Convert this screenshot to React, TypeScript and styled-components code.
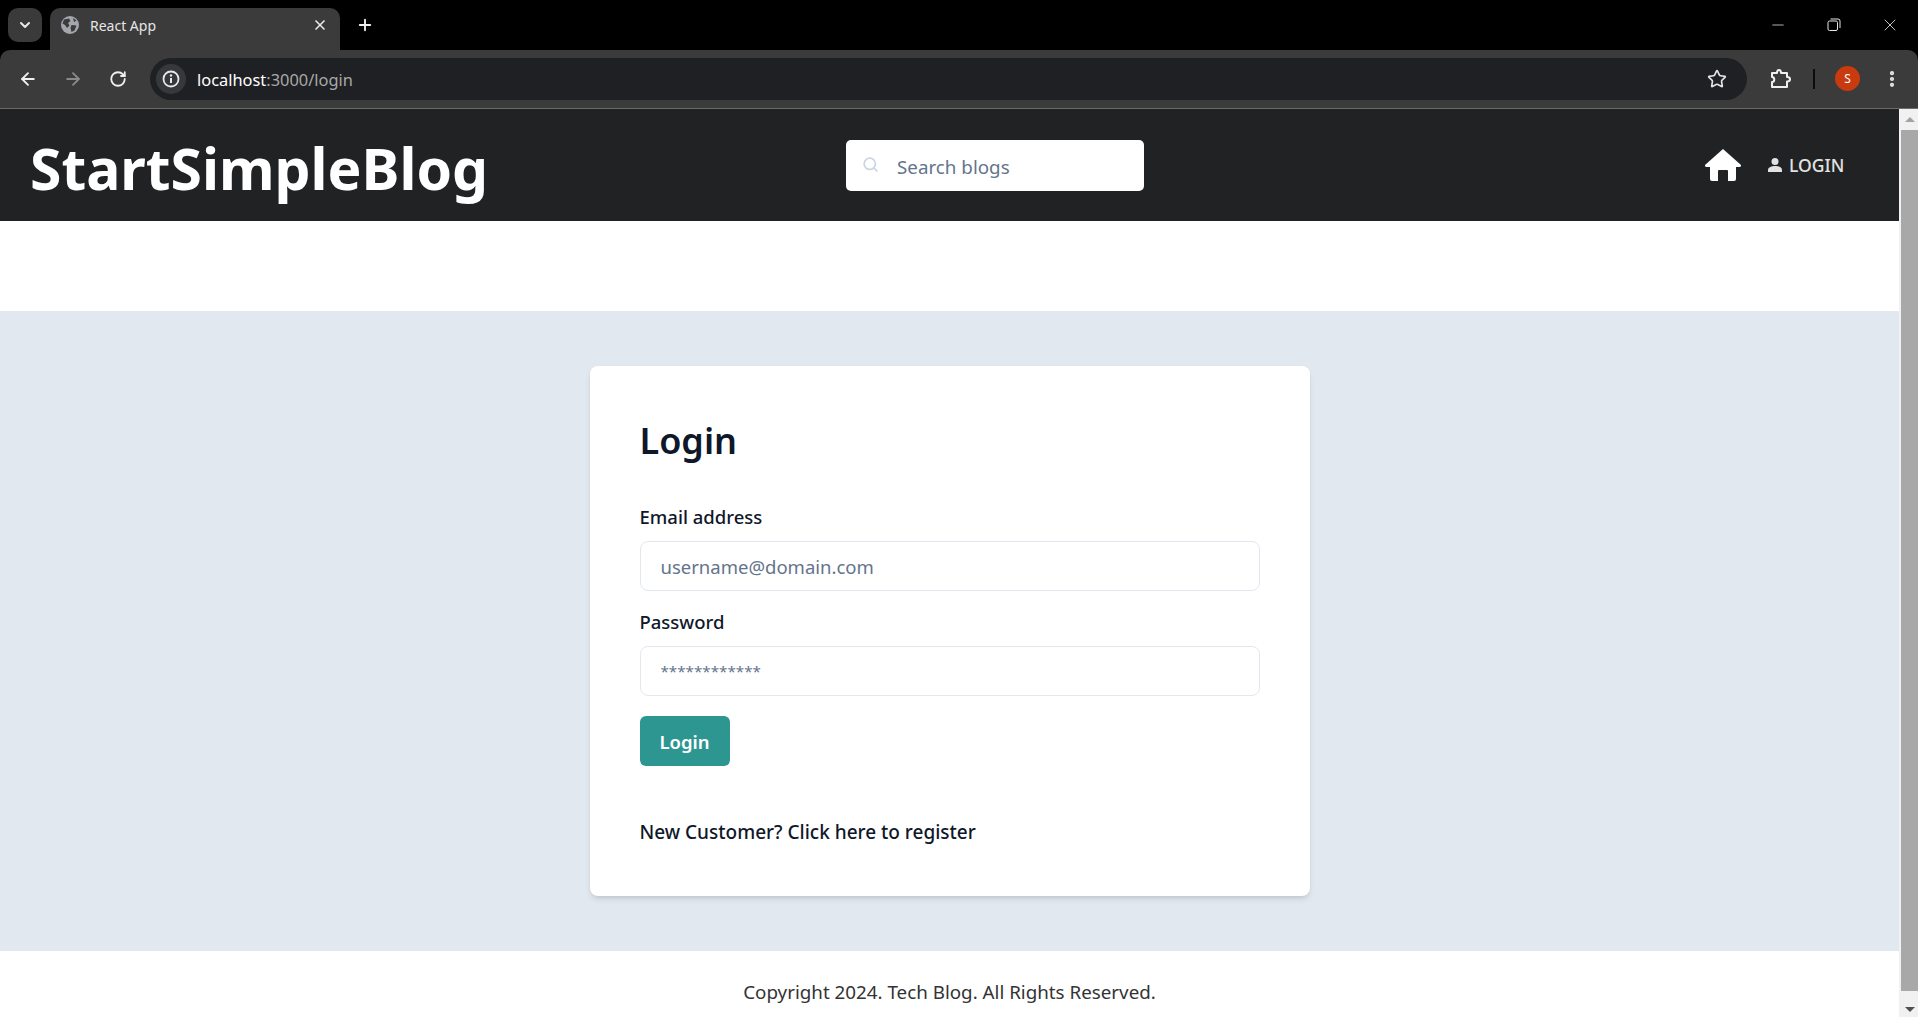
import styled, { createGlobalStyle } from "styled-components";
import { ArrowLeft, ArrowRight, RotateCw, Plus, X, ChevronDown, Star, Minus, EllipsisVertical, Search } from "lucide-react";

const GlobalStyle = createGlobalStyle`
  html, body {
    margin: 0;
    padding: 0;
    height: 100%;
    overflow: hidden;
  }
  * {
    box-sizing: border-box;
  }
  body {
    font-family: "Noto Sans", "Open Sans", sans-serif;
  }
`;

export default function App() {
  return (
    <Window>
      <GlobalStyle />
      <TabStrip>
        <TabSearch>
          <ChevronDown size={16} strokeWidth={3} />
        </TabSearch>
        <Tab>
          <Globe />
          <TabTitle>React App</TabTitle>
          <TabClose>
            <X size={16} strokeWidth={2.5} />
          </TabClose>
        </Tab>
        <NewTab>
          <Plus size={18} strokeWidth={2.5} />
        </NewTab>
        <WindowControls>
          <WinButton>
            <Minus size={18} strokeWidth={1} />
          </WinButton>
          <WinButton>
            <RestoreIcon />
          </WinButton>
          <WinButton>
            <X size={20} strokeWidth={1} />
          </WinButton>
        </WindowControls>
      </TabStrip>
      <Toolbar>
        <NavButton>
          <ArrowLeft size={20} strokeWidth={2.2} />
        </NavButton>
        <NavButton $dim>
          <ArrowRight size={20} strokeWidth={2.2} />
        </NavButton>
        <NavButton>
          <RotateCw size={18} strokeWidth={2.4} />
        </NavButton>
        <AddressBar>
          <InfoChip>
            <InfoIcon />
          </InfoChip>
          <Url>
            <b>localhost</b>:3000/login
          </Url>
          <Star size={20} strokeWidth={2} color="#e3e3e3" />
        </AddressBar>
        <ToolIcons>
          <PuzzleIcon />
          <ToolDivider />
          <Avatar>S</Avatar>
          <EllipsisVertical size={20} strokeWidth={3} color="#e8e8e8" />
        </ToolIcons>
      </Toolbar>
      <Viewport>
        <Page>
          <Header>
            <Logo>StartSimpleBlog</Logo>
            <SearchBox>
              <SearchGlyph>
                <Search size={17} color="#cbd5e1" strokeWidth={2.4} />
              </SearchGlyph>
              <SearchInput placeholder="Search blogs" />
            </SearchBox>
            <HeaderNav>
              <HomeIcon />
              <LoginLink>
                <PersonIcon />
                LOGIN
              </LoginLink>
            </HeaderNav>
          </Header>
          <Gap />
          <Main>
            <Card>
              <Title>Login</Title>
              <Label>Email address</Label>
              <Input placeholder="username@domain.com" />
              <Label>Password</Label>
              <PasswordInput placeholder="************" />
              <SubmitButton>Login</SubmitButton>
              <RegisterLink>New Customer? Click here to register</RegisterLink>
            </Card>
          </Main>
          <Footer>Copyright 2024. Tech Blog. All Rights Reserved.</Footer>
        </Page>
        <Scrollbar>
          <ScrollArrow $up />
          <ScrollThumb />
          <ScrollArrow />
        </Scrollbar>
      </Viewport>
    </Window>
  );
}

const Globe = () => (
  <svg width="18" height="18" viewBox="0 0 18 18">
    <circle cx="9" cy="9" r="9" fill="#a3a7ad" />
    <path d="M3 3.5 L8 2.5 L9.5 5 L7 7 L8.5 9.5 L6 12 L4 9 L1.5 7.5 Z M10.5 9 L15.5 9.5 L13.5 14.5 L10.5 16 L9.5 12 Z M12 2 L15.5 4.5 L13 6 Z" fill="#3b3b3d" />
  </svg>
);

const RestoreIcon = () => (
  <svg width="14" height="14" viewBox="0 0 14 14" fill="none" stroke="#e8e8e8" strokeWidth="1">
    <rect x="1" y="3" width="9.5" height="9.5" rx="1.5" />
    <path d="M3.5 1 H11 A2 2 0 0 1 13 3 V10" />
  </svg>
);

const InfoIcon = () => (
  <svg width="18" height="18" viewBox="0 0 18 18" fill="none">
    <circle cx="9" cy="9" r="7.5" stroke="#e8e8e8" strokeWidth="1.8" />
    <path d="M9 8 V13" stroke="#e8e8e8" strokeWidth="2" />
    <circle cx="9" cy="5.5" r="1.2" fill="#e8e8e8" />
  </svg>
);

const PuzzleIcon = () => (
  <svg width="22" height="22" viewBox="0 0 22 22" fill="none" stroke="#f0f0f0" strokeWidth="2" strokeLinejoin="round">
    <path d="M2 5 H7 C7 1 11 1 11 5 H17 V9 C21 9 21 13.5 17 13.5 V19 H2 V14 C5 14 5 9 2 9 Z" />
  </svg>
);

const HomeIcon = () => (
  <svg width="38" height="34" viewBox="0 0 38 34">
    <path d="M19 1 L37 17 Q37.500 19 35.500 19 L32 19 L32 31 Q32 33 30 33 L24 33 L24 23 Q24 22 23 22 L15 22 Q14 22 14 23 L14 33 L8 33 Q6 33 6 31 L6 19 L2.500 19 Q0.500 19 1 17 Z" fill="#fff" />
  </svg>
);

const PersonIcon = () => (
  <svg width="16" height="16" viewBox="0 0 16 16" fill="#e2e2e2">
    <circle cx="8" cy="4.500" r="3.500" />
    <path d="M1 15 V13 C1 10 5 9 8 9 C11 9 15 10 15 13 V15 Z" />
  </svg>
);

const Window = styled.div`
  width: 1918px;
  height: 1017px;
  overflow: hidden;
  display: flex;
  flex-direction: column;
  background: #000;
`;

const TabStrip = styled.div`
  height: 50px;
  flex: none;
  background: #000;
  display: flex;
  align-items: flex-start;
  padding: 8px 0 0 8px;
`;

const TabSearch = styled.div`
  width: 34px;
  height: 34px;
  border-radius: 10px;
  background: #3a3a3a;
  color: #e8e8e8;
  display: flex;
  align-items: center;
  justify-content: center;
`;

const Tab = styled.div`
  width: 290px;
  height: 42px;
  margin-left: 8px;
  padding: 0 12px 8px 11px;
  border-radius: 10px 10px 0 0;
  background: #3b3b3b;
  display: flex;
  align-items: center;
  gap: 11px;
`;

const TabTitle = styled.span`
  flex: 1;
  color: #e6e6e6;
  font-size: 14px;
`;

const TabClose = styled.span`
  color: #e8e8e8;
  display: flex;
`;

const NewTab = styled.div`
  width: 50px;
  height: 34px;
  color: #eee;
  display: flex;
  align-items: center;
  justify-content: center;
`;

const WindowControls = styled.div`
  margin-left: auto;
  height: 34px;
  display: flex;
  align-items: center;
`;

const WinButton = styled.div`
  width: 56px;
  height: 32px;
  color: #e8e8e8;
  display: flex;
  align-items: center;
  justify-content: center;
`;

const Toolbar = styled.div`
  height: 59px;
  flex: none;
  background: #3b3b3b;
  border-radius: 10px 10px 0 0;
  border-bottom: 1px solid #6b6b6b;
  display: flex;
  align-items: center;
  padding: 0 0 1px 5px;
`;

const NavButton = styled.div<{ $dim?: boolean }>`
  width: 45px;
  height: 34px;
  color: ${(p) => (p.$dim ? "#8a8a8a" : "#f0f0f0")};
  display: flex;
  align-items: center;
  justify-content: center;
`;

const AddressBar = styled.div`
  width: 1597px;
  height: 42px;
  margin-left: 10px;
  border-radius: 21px;
  background: #1f2023;
  display: flex;
  align-items: center;
  padding: 0 20px 0 6px;
`;

const InfoChip = styled.div`
  width: 30px;
  height: 30px;
  border-radius: 50%;
  background: #37383b;
  display: flex;
  align-items: center;
  justify-content: center;
`;

const Url = styled.div`
  flex: 1;
  margin-left: 11px;
  color: #a8a8a8;
  font-size: 16.4px;
  padding-top: 1px;
  b {
    color: #fff;
    font-weight: 400;
  }
`;

const ToolIcons = styled.div`
  flex: 1;
  display: flex;
  align-items: center;
  padding-left: 23px;
`;

const ToolDivider = styled.div`
  width: 2px;
  height: 20px;
  background: #0c0c0c;
  margin: 0 20px 0 21px;
`;

const Avatar = styled.div`
  width: 25px;
  height: 25px;
  border-radius: 50%;
  background: #c93a0e;
  color: #fff;
  font-size: 12px;
  display: flex;
  align-items: center;
  justify-content: center;
  margin-right: 22px;
`;

const Viewport = styled.div`
  flex: 1;
  min-height: 0;
  display: flex;
  background: #fff;
`;

const Page = styled.div`
  flex: 1;
  min-width: 0;
  display: flex;
  flex-direction: column;
`;

const Header = styled.header`
  height: 112px;
  flex: none;
  background: #212224;
  display: grid;
  grid-template-columns: 846px 298px 1fr;
  align-items: center;
  padding-bottom: 10px;
`;

const Logo = styled.div`
  padding: 16px 0 0 30px;
  color: #fff;
  font-size: 57px;
  font-weight: 700;
  line-height: 1;
`;

const SearchBox = styled.div`
  height: 51px;
  border-radius: 5px;
  background: #fff;
  display: flex;
  align-items: center;
  gap: 18px;
  padding-left: 16px;
  margin-top: 10px;
`;

const SearchGlyph = styled.span`
  display: flex;
  margin-top: -2px;
`;

const SearchInput = styled.input`
  flex: 1;
  min-width: 0;
  border: none;
  outline: none;
  background: none;
  padding: 3px 0 0;
  font: inherit;
  font-size: 18.8px;
  &::placeholder {
    color: #64748b;
    opacity: 1;
  }
`;

const HeaderNav = styled.div`
  display: flex;
  align-items: center;
  padding-left: 560px;
  gap: 25px;
  margin-top: 10px;
`;

const LoginLink = styled.div`
  display: flex;
  align-items: center;
  gap: 6px;
  color: #e2e2e2;
  font-size: 17.5px;
  font-weight: 500;
`;

const Gap = styled.div`
  height: 90px;
  flex: none;
`;

const Main = styled.main`
  height: 640px;
  flex: none;
  background: #e2e8f0;
  padding-top: 55px;
  display: flex;
  justify-content: center;
  align-items: flex-start;
`;

const Card = styled.div`
  width: 720px;
  height: 530px;
  background: #fff;
  border-radius: 8px;
  padding: 55px 50px 0;
  box-shadow: 0 4px 6px -1px rgba(0, 0, 0, 0.1), 0 2px 4px -2px rgba(0, 0, 0, 0.1);
  display: flex;
  flex-direction: column;
  align-items: flex-start;
`;

const Title = styled.h1`
  margin: 0 0 42px;
  color: #0f172a;
  font-size: 36px;
  font-weight: 600;
  line-height: 40px;
`;

const Label = styled.label`
  color: #0f172a;
  font-size: 18.5px;
  font-weight: 500;
  line-height: 28px;
  margin-bottom: 10px;
`;

const Input = styled.input`
  width: 100%;
  height: 50px;
  flex: none;
  border: 1px solid #e2e8f0;
  border-radius: 8px;
  padding: 0 20px;
  margin-bottom: 17px;
  font: inherit;
  font-size: 18.5px;
  outline: none;
  &::placeholder {
    color: #64748b;
    opacity: 1;
  }
`;

const PasswordInput = styled(Input)`
  font-size: 15.2px;
  margin-bottom: 16px;
`;

const SubmitButton = styled.button`
  width: 90px;
  height: 50px;
  margin-top: 4px;
  border: none;
  border-radius: 6px;
  background: #2d9690;
  color: #fff;
  font: inherit;
  font-size: 18.5px;
  font-weight: 600;
`;

const RegisterLink = styled.div`
  margin-top: 52px;
  color: #0f172a;
  font-size: 19px;
  font-weight: 500;
  line-height: 28px;
`;

const Footer = styled.footer`
  flex: 1;
  display: flex;
  justify-content: center;
  padding-top: 28px;
  color: #333;
  font-size: 18.8px;
`;

const Scrollbar = styled.div`
  width: 19px;
  flex: none;
  background: #f1f1f1;
  display: flex;
  flex-direction: column;
  align-items: stretch;
  padding-left: 2px;
`;

const ScrollThumb = styled.div`
  flex: 1;
  background: #a8a8a8;
`;

const ScrollArrow = styled.div<{ $up?: boolean }>`
  height: ${(p) => (p.$up ? "21px" : "26px")};
  flex: none;
  display: flex;
  justify-content: center;
  align-items: flex-start;
  padding-top: ${(p) => (p.$up ? "8px" : "16px")};
  &::before {
    content: "";
    border-left: 5px solid transparent;
    border-right: 5px solid transparent;
    ${(p) => (p.$up ? "border-bottom: 5px solid #a3a3a3;" : "border-top: 5px solid #505050;")}
  }
`;
